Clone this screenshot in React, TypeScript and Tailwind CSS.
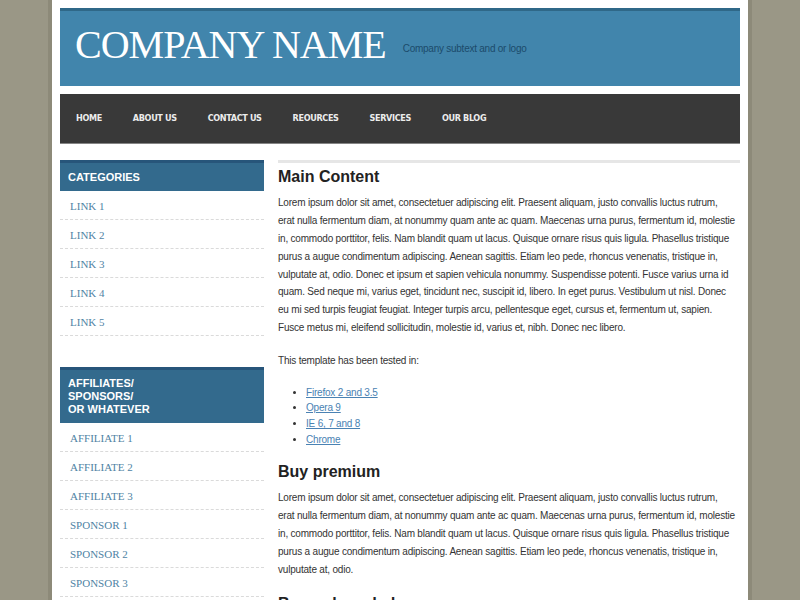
import React from 'react';

const navItems = ['HOME', 'ABOUT US', 'CONTACT US', 'REOURCES', 'SERVICES', 'OUR BLOG'];
const categories = ['LINK 1', 'LINK 2', 'LINK 3', 'LINK 4', 'LINK 5'];
const affiliates = ['AFFILIATE 1', 'AFFILIATE 2', 'AFFILIATE 3', 'SPONSOR 1', 'SPONSOR 2', 'SPONSOR 3'];
const browsers = ['Firefox 2 and 3.5', 'Opera 9', 'IE 6, 7 and 8', 'Chrome'];

// lines broken where the original template breaks them
const mainLines = [
  'Lorem ipsum dolor sit amet, consectetuer adipiscing elit. Praesent aliquam, justo convallis luctus rutrum,',
  'erat nulla fermentum diam, at nonummy quam ante ac quam. Maecenas urna purus, fermentum id, molestie',
  'in, commodo porttitor, felis. Nam blandit quam ut lacus. Quisque ornare risus quis ligula. Phasellus tristique',
  'purus a augue condimentum adipiscing. Aenean sagittis. Etiam leo pede, rhoncus venenatis, tristique in,',
  'vulputate at, odio. Donec et ipsum et sapien vehicula nonummy. Suspendisse potenti. Fusce varius urna id',
  'quam. Sed neque mi, varius eget, tincidunt nec, suscipit id, libero. In eget purus. Vestibulum ut nisl. Donec',
  'eu mi sed turpis feugiat feugiat. Integer turpis arcu, pellentesque eget, cursus et, fermentum ut, sapien.',
  'Fusce metus mi, eleifend sollicitudin, molestie id, varius et, nibh. Donec nec libero.',
];
const shortLines = [...mainLines.slice(0, 4), 'vulputate at, odio.'];

function Para({ lines, className }: { lines: string[]; className?: string }) {
  return (
    <p className={className}>
      {lines.map((l, i) => (
        <span key={i} className="block whitespace-nowrap">
          {l}
        </span>
      ))}
    </p>
  );
}

function SideBox({ title, links, headClass }: { title: string[]; links: string[]; headClass: string }) {
  return (
    <div>
      <div
        className={`border-t-[3px] border-[#27557a] bg-[#336a8d] px-2 py-[7px] text-[11px] font-bold text-white ${headClass}`}
      >
        {title.map((t) => (
          <div key={t}>{t}</div>
        ))}
      </div>
      <ul>
        {links.map((l) => (
          <li
            key={l}
            className="flex h-[29px] items-center border-b border-dashed border-[#dadada] pl-[10px] pt-[2px] font-['Liberation_Serif',serif] text-[11px] text-[#4f83a4]"
          >
            {l}
          </li>
        ))}
      </ul>
    </div>
  );
}

export default function App() {
  return (
    <div className="flex min-h-screen justify-center bg-[#9a9786] font-['Liberation_Sans',Arial,sans-serif]">
      <div className="min-h-screen w-[704px] border-x-4 border-[#8d8a79] bg-white px-2 pt-2">
        {/* Header */}
        <div className="flex h-[78px] items-start border-t-[3px] border-[#2f6888] bg-[#4185ac] pl-[15px] pt-[14px]">
          <h1 className="font-['Liberation_Serif',serif] text-[40px] leading-[40px] tracking-[-1px] text-white">
            COMPANY NAME
          </h1>
          <p className="ml-[17px] mt-[18px] text-[10px] leading-[12px] tracking-[-0.25px] text-[#1c4b6b]">
            Company subtext and or logo
          </p>
        </div>

        {/* Nav */}
        <nav className="mt-2 flex h-[50px] items-center gap-[31px] border-b border-[#858585] bg-[#393939] pl-4">
          {navItems.map((n) => (
            <span
              key={n}
              className="font-['DejaVu_Sans_Condensed',sans-serif] text-[9px] font-bold tracking-[-0.35px] text-[#ececec]"
            >
              {n}
            </span>
          ))}
        </nav>

        <div className="mt-4 flex gap-[14px]">
          {/* Sidebar */}
          <aside className="w-[204px] shrink-0">
            <SideBox title={['CATEGORIES']} links={categories} headClass="leading-[14px]" />
            <div className="mt-[31px]">
              <SideBox
                title={['AFFILIATES/', 'SPONSORS/', 'OR WHATEVER']}
                links={affiliates}
                headClass="leading-[13px]"
              />
            </div>
          </aside>

          {/* Main content */}
          <main className="min-w-0 flex-1 border-t-[3px] border-[#e6e6e6] text-[10px] leading-[17.875px] tracking-[-0.2px] text-[#333]">
            <h2 className="mt-[4px] text-[16px] font-bold leading-[19px] tracking-normal text-[#222]">Main Content</h2>
            <Para className="mt-[8px]" lines={mainLines} />
            <p className="mt-[15px]">This template has been tested in:</p>
            <ul className="mt-[15px] list-disc pl-[28px] leading-[15.6px]">
              {browsers.map((b) => (
                <li key={b}>
                  <a href="#" className="text-[#4a82b3] underline">
                    {b}
                  </a>
                </li>
              ))}
            </ul>
            <h2 className="mt-[15px] text-[16px] font-bold leading-[19px] tracking-normal text-[#222]">Buy premium</h2>
            <Para className="mt-[8px]" lines={shortLines} />
            <h2 className="mt-[15px] text-[16px] font-bold leading-[19px] tracking-normal text-[#222]">Buy unbranded</h2>
            <Para className="mt-[8px]" lines={shortLines} />
          </main>
        </div>
      </div>
    </div>
  );
}
